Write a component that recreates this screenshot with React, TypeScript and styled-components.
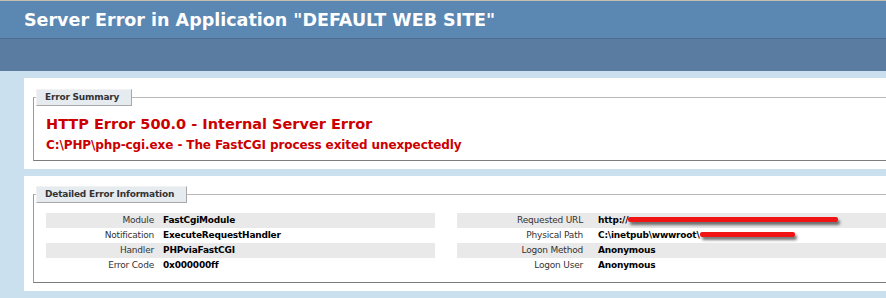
import React from "react";
import styled, { createGlobalStyle } from "styled-components";

const GlobalStyle = createGlobalStyle`
  html, body {
    margin: 0;
    padding: 0;
    overflow: hidden;
    background: #cbe0ef;
    font-family: "DejaVu Sans", Verdana, sans-serif;
  }
`;

const Page = styled.div`
  width: 1000px;
  border-top: 1px solid #c6bfb1;
`;

const Header = styled.div`
  height: 37px;
  padding-left: 24px;
  display: flex;
  align-items: center;
  background: #5b87b3;
`;

const Title = styled.h1`
  margin: 0;
  font-family: "DejaVu Sans", Verdana, sans-serif;
  font-size: 17.5px;
  font-weight: bold;
  color: #ffffff;
  white-space: nowrap;
`;

const VersionBar = styled.div`
  height: 32px;
  border-top: 1px solid #4a6c8e;
  background: #5a7ca1;
`;

const Content = styled.div`
  display: flex;
  flex-direction: column;
  gap: 7px;
  padding: 7px 0 0 24px;
`;

const Panel = styled.div`
  min-height: 10px;
  padding: 0 0 8px 9px;
  background: #ffffff;
`;

const Box = styled.fieldset<{ $top: number; $bottom: number }>`
  margin: ${p => p.$top}px 0 0 0;
  padding: 0 12px ${p => p.$bottom}px 12px;
  border: 1px solid;
  border-color: #b8b8b8 #9a9a9a #7d7d7d #9a9a9a;
`;

const Legend = styled.legend`
  margin-left: -10px;
  padding: 1px 12px 1px 8px;
  background: #e6ebf0;
  border-top: 1px solid #f2f2f2;
  border-left: 1px solid #f2f2f2;
  border-right: 1px solid #a8a8a8;
  border-bottom: 1px solid #a8a8a8;
  font-size: 9px;
  line-height: 13px;
  letter-spacing: -0.2px;
  font-weight: bold;
  color: #333333;
`;

const ErrorTitle = styled.h2`
  margin: 9px 0 0 0;
  font-size: 14.5px;
  line-height: 18px;
  font-weight: bold;
  color: #cc0000;
`;

const ErrorText = styled.h3`
  margin: 4px 0 0 0;
  font-size: 12px;
  line-height: 16px;
  letter-spacing: -0.1px;
  font-weight: bold;
  color: #cc0000;
`;

const Details = styled.div`
  display: flex;
  gap: 22px;
  margin-top: 10px;
`;

const Table = styled.div<{ $width: number }>`
  width: ${p => p.$width}px;
  display: flex;
  flex-direction: column;
`;

const Row = styled.div<{ $alt: boolean; $label: number; $gap: number }>`
  display: grid;
  grid-template-columns: ${p => p.$label}px 1fr;
  column-gap: ${p => p.$gap}px;
  height: 15px;
  align-items: center;
  background: ${p => (p.$alt ? "#e9e9e9" : "transparent")};
  font-size: 9px;
  line-height: 13px;
  letter-spacing: -0.2px;
`;

const Label = styled.div`
  text-align: right;
  color: #333333;
`;

const Value = styled.div`
  font-weight: bold;
  color: #000000;
  white-space: nowrap;
`;

const Redacted = styled.span<{ $width: number }>`
  display: inline-block;
  width: ${p => p.$width}px;
  height: 5px;
  vertical-align: 1px;
  background: #f01414;
  border-radius: 2px;
  box-shadow: 2px 3px 3px rgba(0, 0, 0, 0.55);
`;

type Field = { label: string; value: React.ReactNode };

const leftFields: Field[] = [
  { label: "Module", value: "FastCgiModule" },
  { label: "Notification", value: "ExecuteRequestHandler" },
  { label: "Handler", value: "PHPviaFastCGI" },
  { label: "Error Code", value: "0x000000ff" },
];

const rightFields: Field[] = [
  {
    label: "Requested URL",
    value: (
      <>
        http://<Redacted $width={210} />
      </>
    ),
  },
  {
    label: "Physical Path",
    value: (
      <>
        C:\inetpub\wwwroot\<Redacted $width={95} />
      </>
    ),
  },
  { label: "Logon Method", value: "Anonymous" },
  { label: "Logon User", value: "Anonymous" },
];

const FieldTable: React.FC<{ fields: Field[]; width: number; label: number; gap: number }> = props => (
  <Table $width={props.width}>
    {props.fields.map((f, i) => (
      <Row key={f.label} $alt={i % 2 === 0} $label={props.label} $gap={props.gap}>
        <Label>{f.label}</Label>
        <Value>{f.value}</Value>
      </Row>
    ))}
  </Table>
);

const App: React.FC = () => {
  return (
    <Page>
      <GlobalStyle />
      <Header>
        <Title>Server Error in Application "DEFAULT WEB SITE"</Title>
      </Header>
      <VersionBar />
      <Content>
        <Panel>
          <Box $top={11} $bottom={7}>
            <Legend>Error Summary</Legend>
            <ErrorTitle>HTTP Error 500.0 - Internal Server Error</ErrorTitle>
            <ErrorText>
              C:\PHP\php-cgi.exe - The FastCGI process exited unexpectedly
            </ErrorText>
          </Box>
        </Panel>
        <Panel>
          <Box $top={10} $bottom={9}>
            <Legend>Detailed Error Information</Legend>
            <Details>
              <FieldTable fields={leftFields} width={389} label={108} gap={9} />
              <FieldTable fields={rightFields} width={520} label={126} gap={15} />
            </Details>
          </Box>
        </Panel>
        <Panel />
      </Content>
    </Page>
  );
};

export default App;
